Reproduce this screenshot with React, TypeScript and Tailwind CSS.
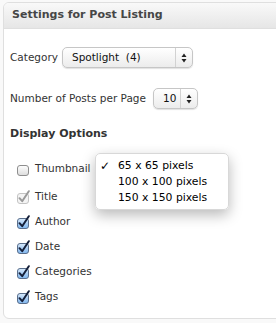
import React from "react";

const font = { fontFamily: '"DejaVu Sans", Verdana, sans-serif' };

function Box({ state }: { state: "off" | "on" | "disabled" }) {
  return (
    <svg width="15" height="15" viewBox="0 0 15 15" className="shrink-0">
      <defs>
        <linearGradient id="gOff" x1="0" y1="0" x2="0" y2="1">
          <stop offset="0" stopColor="#ffffff" />
          <stop offset="1" stopColor="#dcdcdc" />
        </linearGradient>
        <linearGradient id="gOn" x1="0" y1="0" x2="0" y2="1">
          <stop offset="0" stopColor="#d9ebfc" />
          <stop offset="0.5" stopColor="#a9cdf3" />
          <stop offset="1" stopColor="#7fb6ee" />
        </linearGradient>
      </defs>
      <rect
        x="1.5"
        y="3.5"
        width="11"
        height="10"
        rx="2.5"
        fill={state === "on" ? "url(#gOn)" : state === "disabled" ? "#f4f4f4" : "url(#gOff)"}
        stroke={state === "on" ? "#5a6f8c" : state === "disabled" ? "#c4c4c4" : "#8e8e8e"}
        strokeWidth="1"
      />
      {state !== "off" && (
        <path
          d="M3.5 8.2 L6.2 11.2 L12.8 1.2"
          fill="none"
          stroke={state === "on" ? "#15203a" : "#9a9a9a"}
          strokeWidth="2"
          strokeLinecap="round"
          strokeLinejoin="round"
        />
      )}
    </svg>
  );
}

function Arrows() {
  return (
    <svg width="6" height="10" viewBox="0 0 6 10">
      <path d="M3 0.5 L5.5 4 L0.5 4 Z" fill="#222" />
      <path d="M3 9.5 L5.5 6 L0.5 6 Z" fill="#222" />
    </svg>
  );
}

function Select({ text, w, div }: { text: string; w: string; div: string }) {
  return (
    <div
      className={`${w} h-[21px] rounded-[5px] border border-[#c6c6c6] bg-gradient-to-b from-[#ffffff] to-[#ececec] shadow-[0_1px_1px_rgba(0,0,0,0.12)] flex items-center text-[10.5px] text-[#111]`}
    >
      <div className={`${div} pl-[9px] h-full flex items-center border-r border-[#d2d2d2] whitespace-pre`}>{text}</div>
      <div className="flex-1 flex items-center justify-center">
        <Arrows />
      </div>
    </div>
  );
}

function Row({ label, state, mt }: { label: string; state: "off" | "on" | "disabled"; mt: string }) {
  return (
    <div className={`${mt} h-[16px] flex items-center pl-[6px]`}>
      <Box state={state} />
      <span className="ml-[4px] text-[10.5px] text-[#333]">{label}</span>
    </div>
  );
}

export default function App() {
  return (
    <div className="w-[276px] h-[323px] overflow-hidden bg-[#f9f9f9] pt-[2px] pl-[3px]" style={font}>
      <div className="w-[300px] h-[317px] border border-[#dfdfdf] rounded-[6px] bg-white overflow-hidden">
        <div className="h-[26px] border-b border-[#dfdfdf] bg-gradient-to-b from-[#f9f9f9] to-[#e6e6e6] flex items-center pl-[8px]">
          <span className="text-[11px] font-bold text-[#464646]">Settings for Post Listing</span>
        </div>
        <div className="pl-[6px]">
          <div className="mt-[18px] flex items-center">
            <span className="text-[10.5px] text-[#333] w-[52px]">Category</span>
            <Select text="Spotlight  (4)" w="w-[131px]" div="w-[113px]" />
          </div>
          <div className="mt-[20px] flex items-center">
            <span className="text-[10.5px] text-[#333] w-[143px]">Number of Posts per Page</span>
            <Select text="10" w="w-[45px]" div="w-[27px]" />
          </div>
          <div className="mt-[17px] h-[16px] flex items-center text-[11px] font-bold text-[#333]">Display Options</div>
          <div className="relative">
            <div className="mt-[19px] h-[16px] flex items-center pl-[6px]">
              <Box state="off" />
              <span className="ml-[4px] text-[10.5px] text-[#333]">Thumbnail</span>
              <div className="absolute left-[85px] top-[-8px] w-[134px] h-[57px] rounded-[5px] bg-white/95 border border-[#d8d8d8] shadow-[0_5px_14px_rgba(0,0,0,0.28)] pt-[4px] text-[10.8px] text-black">
                <div className="h-[16px] flex items-center">
                  <span className="w-[22px] pl-[4px] text-[12px]">✓</span>
                  <span>65 x 65 pixels</span>
                </div>
                <div className="h-[16px] flex items-center pl-[22px]">100 x 100 pixels</div>
                <div className="h-[16px] flex items-center pl-[22px]">150 x 150 pixels</div>
              </div>
            </div>
          </div>
          <Row label="Title" state="disabled" mt="mt-[12px]" />
          <Row label="Author" state="on" mt="mt-[9px]" />
          <Row label="Date" state="on" mt="mt-[9px]" />
          <Row label="Categories" state="on" mt="mt-[9px]" />
          <Row label="Tags" state="on" mt="mt-[9px]" />
        </div>
      </div>
    </div>
  );
}
